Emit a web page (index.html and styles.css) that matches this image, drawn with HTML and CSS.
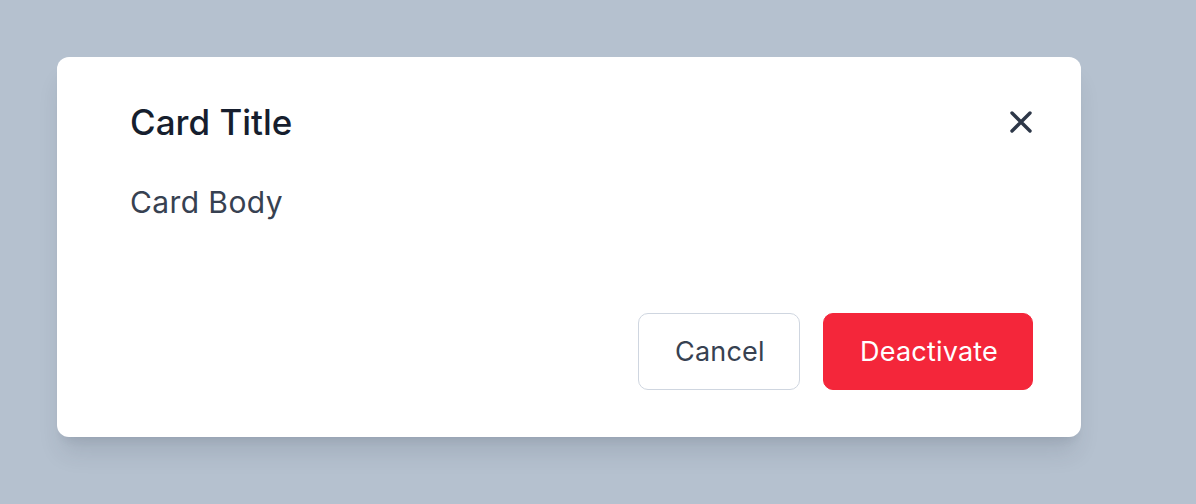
FILE: index.html
```html
<!DOCTYPE html>
<html>
<head>
<meta charset="utf-8">
<link rel="stylesheet" href="styles.css">
</head>
<body>
<div class="card">
  <div class="card-header">
    <h2 class="card-title">Card Title</h2>
    <button class="close" aria-label="Close">
      <svg width="22" height="22" viewBox="0 0 22 22"><path d="M2 2L20 20M20 2L2 20" stroke="#2d3748" stroke-width="3.4" stroke-linecap="round" fill="none"/></svg>
    </button>
  </div>
  <p class="card-body">Card Body</p>
  <div class="card-footer">
    <button class="btn btn-cancel">Cancel</button>
    <button class="btn btn-danger">Deactivate</button>
  </div>
</div>
</body>
</html>
```
FILE: styles.css
```css
html, body {
  margin: 0;
  padding: 0;
}
body {
  background: #b5c1cf;
  font-family: Inter, "Noto Sans", sans-serif;
  padding: 57px;
  height: 504px;
  box-sizing: border-box;
}
.card {
  width: 1024px;
  height: 380px;
  box-sizing: border-box;
  background: #ffffff;
  border-radius: 12px;
  box-shadow: 0 20px 25px -5px rgba(30, 41, 59, 0.12), 0 8px 10px -6px rgba(30, 41, 59, 0.1);
  padding: 44px 48px 47px 73px;
  display: flex;
  flex-direction: column;
}
.card-header {
  display: flex;
  align-items: center;
  justify-content: space-between;
}
.card-title {
  margin: 0;
  font-size: 35px;
  line-height: 42px;
  font-weight: 500;
  color: #161e2e;
}
.close {
  background: none;
  border: 0;
  padding: 0;
  width: 22px;
  height: 22px;
  margin-right: 1px;
  display: flex;
}
.card-body {
  margin: 41px 0 0;
  font-size: 30px;
  line-height: 36px;
  letter-spacing: 0.4px;
  color: #374151;
}
.card-footer {
  margin-top: auto;
  display: flex;
  justify-content: flex-end;
  gap: 23px;
}
.btn {
  font-family: Inter, "Noto Sans", sans-serif;
  font-size: 27px;
  height: 77px;
  padding: 0 36px;
  border-radius: 10px;
  font-weight: 400;
  letter-spacing: 0.2px;
  box-sizing: border-box;
}
.btn-cancel {
  background: #fff;
  border: 1px solid #cfd6e0;
  color: #374151;
  width: 162px;
}
.btn-danger {
  background: #f4263a;
  border: 1px solid #f4263a;
  color: #ffffff;
  width: 210px;
}
```
